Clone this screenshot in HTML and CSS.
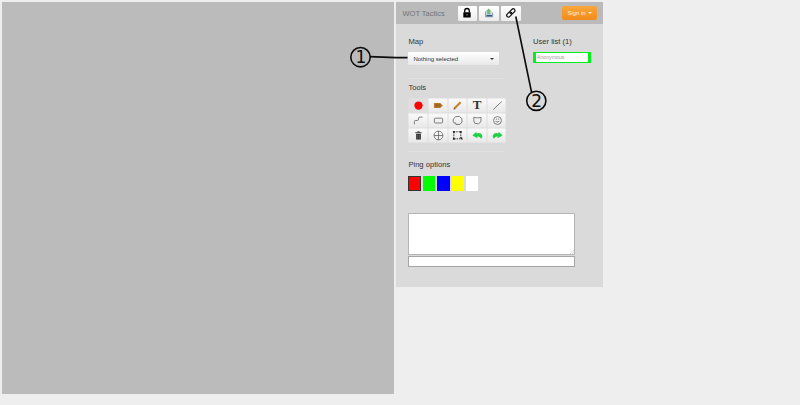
FILE: index.html
```html
<!DOCTYPE html>
<html lang="en">
<head>
<meta charset="utf-8">
<title>WOT Tactics</title>
<link rel="stylesheet" href="styles.css">
</head>
<body>
<main class="app">
  <section class="board"></section>
  <aside class="panel">
    <header class="bar">
      <span class="brand">WOT Tactics</span>
      <div class="actions">
        <button class="action"><svg width="10" height="12" viewBox="0 0 10 12"><path d="M2.7 5.5V3.8a2.3 2.3 0 0 1 4.6 0v1.7" fill="none" stroke="#000" stroke-width="1.3"/><rect x="1.3" y="5.2" width="7.4" height="5.2" rx=".5"/><path d="M5 7v1.6" stroke="#aaa" stroke-width=".8"/></svg></button>
        <button class="action"><svg width="10" height="12" viewBox="0 0 10 12"><path d="M1.5 4.5v5.3h7.2V5.5" fill="#c5d5e2" stroke="#7890a4" stroke-width=".8"/><path d="M2.5 8.7h5.6" stroke="#345c82" stroke-width="1.5"/><path d="M3.2 7.3V4.5H1.6l3-3 3 3H6.2v2.8z" fill="#77ba78"/></svg></button>
        <button class="action"><svg width="12" height="12" viewBox="0 0 12 12"><g fill="none" stroke="#111" stroke-width="1.2" transform="rotate(-45 6 6)"><rect x=".8" y="4.1" width="5.8" height="3.5" rx="1.7"/><rect x="5.3" y="4.1" width="5.8" height="3.5" rx="1.7"/></g></svg></button>
      </div>
      <button class="signin">Sign in <span class="caret"></span></button>
    </header>
    <div class="content">
      <div class="top">
        <div class="map">
          <h2>Map</h2>
          <button class="select">Nothing selected<span class="caret"></span></button>
        </div>
        <div class="users">
          <h2>User list (1)</h2>
          <div class="user"><span>Anonymous</span></div>
        </div>
      </div>
      <hr>
      <h2 class="tools-title">Tools</h2>
      <div class="tools">
        <button class="tool active"><svg viewBox="0 0 12 12"><circle cx="6" cy="6" r="4.5" fill="#f00"/></svg></button>
        <button class="tool"><svg viewBox="0 0 12 12"><path d="M1 3.2h6.7L11 6 7.7 8.8H1z" fill="#c27d2e"/><path d="M3.4 4v4M5.3 4v4M7.6 4v4" stroke="#4a3318" stroke-width=".6"/></svg></button>
        <button class="tool"><svg viewBox="0 0 12 12"><path d="M2.8 9.1 9.4 2.5" stroke="#c48435" stroke-width="2.4"/><path d="m1.6 10.5.7-2.3 1.6 1.5z" fill="#765126"/></svg></button>
        <button class="tool letter">T</button>
        <button class="tool"><svg viewBox="0 0 12 12"><path d="m1.4 10.4 9.2-8.8"/></svg></button>
        <button class="tool"><svg viewBox="0 0 12 12"><path d="M1.5 10.2V7.4Q1.5 5.8 3 6h1.8Q6 6 6 4.4V3.3Q6 2.3 7.5 2.3h3"/></svg></button>
        <button class="tool"><svg viewBox="0 0 12 12"><rect x="1.5" y="3.5" width="9" height="5.2" rx="1"/></svg></button>
        <button class="tool"><svg viewBox="0 0 12 12"><path d="M2.2 8.8Q.7 7 1.5 4.5L3.8 1.8 8.2 1.6 10.8 4 11 7.5 8.7 10.3H4.3L4 8.6z"/></svg></button>
        <button class="tool"><svg viewBox="0 0 12 12"><path d="M2 2.6 6 3.2 9.9 2.6 9.7 7.3 7 9.7 3 9 2 6.6z"/></svg></button>
        <button class="tool"><svg viewBox="0 0 12 12"><circle cx="6" cy="6" r="4.3"/><path d="M3.8 6.8Q6 8.6 8 6.7M5 4v1.2M7.2 4v1.2"/></svg></button>
        <button class="tool"><svg viewBox="0 0 12 12"><path d="M3.4 4.2h5.2v6.2H3.4z" fill="#333"/><path d="M2.6 3h6.8M4.8 2h2.4" stroke="#222" stroke-width="1"/><path d="M5 5v4.5M7 5v4.5" stroke="#888" stroke-width=".5"/></svg></button>
        <button class="tool"><svg viewBox="0 0 12 12"><circle cx="6" cy="6" r="4.8"/><path d="M1.2 6h9.6M6 1.2v9.6"/></svg></button>
        <button class="tool"><svg viewBox="0 0 12 12"><rect x="2" y="2" width="7.6" height="7.6" stroke="#222" stroke-dasharray="1.6 1"/><path d="M1 1h2v2H1zM8.6 1h2v2h-2zM1 8.6h2v2H1zM8.3 8.3h3v3z" fill="#222" stroke="none"/></svg></button>
        <button class="tool"><svg viewBox="0 0 12 12"><path d="m.5 6 4.2-4 .3 1.9Q9.7 2 11.4 7L10 9.6Q8.5 7 5.7 6.9l.3 2z" fill="#1fd047"/></svg></button>
        <button class="tool"><svg viewBox="0 0 12 12"><path d="M11.5 6 7.3 2 7 3.9Q2.3 2 .6 7L2 9.6Q3.5 7 6.3 6.9l-.3 2z" fill="#1fd047"/></svg></button>
      </div>
      <hr class="rule-tools">
      <h2 class="ping-title">Ping options</h2>
      <div class="colors"><i class="red"></i><i class="green"></i><i class="blue"></i><i class="yellow"></i><i class="white"></i></div>
      <div class="chat"><div class="log"><svg class="grip" viewBox="0 0 4 4"><path d="m0 4 4-4M2 4l2-2" stroke="#bbb" stroke-width=".5"/></svg></div><div class="entry"></div></div>
    </div>
  </aside>
</main>
<svg class="notes" width="800" height="405" viewBox="0 0 800 405">
  <g fill="none" stroke="#0c0c0c" stroke-width="1.6"><circle cx="360.5" cy="57.2" r="9.7"/><path d="M370 56.6 396 57.6h11.5"/><circle cx="536.3" cy="100.8" r="9.6"/><path d="m515.8 16.5 15.8 76"/></g>
  <text x="360.8" y="63.4">1</text><text x="536.6" y="106.8">2</text>
</svg>
</body>
</html>
```

FILE: styles.css
```css
* { box-sizing: border-box; }
body { margin: 0; width: 800px; height: 405px; overflow: hidden; background: #eee; color: #333; font-family: "Liberation Sans", Arial, sans-serif; }
button { border: 0; padding: 0; margin: 0; font-family: inherit; }
.app { display: flex; align-items: flex-start; gap: 2px; padding: 2px; }
.board { width: 392px; height: 392px; background: #bbb; }
.panel { width: 207px; height: 284.5px; background: #dadada; }
.bar { display: flex; align-items: center; height: 22px; padding: 0 6px 0 6.5px; background: #bababa; }
.brand { width: 55px; font-size: 7.5px; color: #747474; white-space: nowrap; }
.actions { display: flex; gap: 2px; }
.action { display: flex; align-items: center; justify-content: center; width: 19.8px; height: 15px; border-radius: 1px; background: linear-gradient(#fff, #ececec); }
.signin { display: flex; align-items: center; justify-content: center; gap: 2px; width: 35px; height: 14px; margin-left: auto; border-radius: 2px; background: linear-gradient(#f9a63c, #f18c1b); color: #fff0d8; font-size: 5.9px; }
.caret { border: 2px solid transparent; border-top: 2px solid currentColor; border-bottom: 0; }
.content { padding: 12px 12px 0 12.4px; }
h2 { margin: 0; font-size: 7.6px; line-height: 12px; font-weight: 400; color: #333; }
.top { display: flex; justify-content: space-between; height: 40px; }
.map { width: 91px; }
.users { width: 58px; }
.select { display: flex; align-items: center; justify-content: space-between; width: 100%; height: 13px; margin-top: 4px; padding: 0 5px; border-radius: 1px; background: linear-gradient(#fff, #e8e8e8); box-shadow: 0 0 1px #ccc; color: #333; font-size: 6px; }
.user { height: 11px; margin-top: 4px; border: solid #00f01a; border-width: 1px 3px; background: #fff; line-height: 9px; padding-left: 1px; font-size: 5.2px; color: #999; }
.user span { display: block; height: 9px; }
hr { width: 97px; height: 1px; margin: 2px 0 3px; border: 0; background: #e0e0e0; }
.tools-title { margin-bottom: 3.5px; }
.tools { display: grid; grid-template-columns: repeat(5, 1fr); grid-auto-rows: 15.2px; width: 98px; }
.tool { display: flex; align-items: center; justify-content: center; background: linear-gradient(#fafafa, #e8e8e8); box-shadow: inset 0 0 0 .5px #ddd; }
.active { background: #dfdfdf; }
.tool svg { width: 11px; height: 11px; margin-left: 1px; fill: none; }
.tool svg > path:not([fill]):not([stroke]), .tool svg > rect:not([stroke]), .tool svg > circle:not([fill]) { stroke: #555; stroke-width: .8; }
.letter { color: #333; font: bold 13px "Liberation Serif", serif; }
.rule-tools { margin: 8px 0 6.5px; }
.colors { display: flex; gap: 2px; margin-top: 5px; }
.colors i { width: 12.4px; height: 15px; }
.red { background: #f00; border: 1px solid #333; }
.green { background: #0f0; }
.blue { background: #00f; }
.yellow { background: #ff0; }
.white { background: #fff; }
.chat { width: 167px; margin-top: 22.5px; }
.log { display: flex; align-items: flex-end; justify-content: flex-end; height: 42px; border: 1px solid #b5b5b5; background: #fff; }
.grip { width: 4px; height: 4px; }
.entry { height: 11px; margin-top: 1px; border: 1px solid #a5a5a5; background: #fff; }
.notes { position: absolute; left: 0; top: 0; pointer-events: none; }
.notes text { font: 17px "DejaVu Sans", sans-serif; text-anchor: middle; fill: #0c0c0c; }
```
